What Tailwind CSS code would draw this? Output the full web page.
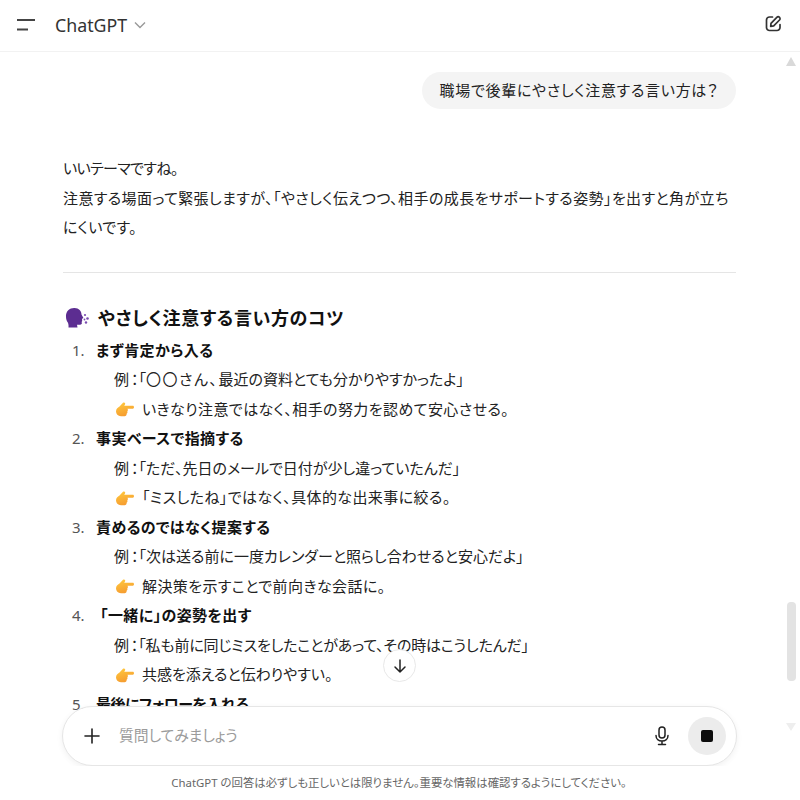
<!DOCTYPE html>
<html lang="ja">
<head>
    <meta charset="UTF-8">
    <meta name="viewport" content="width=device-width, initial-scale=1.0">
    <title>ChatGPT</title>
    <script src="https://cdn.jsdelivr.net/npm/@tailwindcss/browser@4"></script>
</head>
<body class="bg-white h-[800px] w-[800px] overflow-hidden flex flex-col text-[#0d0d0d] text-[15px] leading-[29.5px] font-['Noto_Sans','Noto_Sans_CJK_JP',sans-serif] [font-feature-settings:'palt']">
    <svg width="0" height="0" class="absolute">
        <defs>
            <linearGradient id="handFill" x1="0.2" y1="0" x2="0.6" y2="1">
                <stop offset="0" stop-color="#ffc83d"/>
                <stop offset="1" stop-color="#f59a2f"/>
            </linearGradient>
            <symbol id="hand" viewBox="0 0 20 16">
                <path d="M1 10.500C1 8 2.500 6.800 4.500 5.500L8 1.800c1.200-1 2.800.2 2 1.600L9.200 4.800h8.600c1.600 0 1.600 2.900 0 2.900h-5.300c.6 1 .6 2-.2 2.600.4 1 .1 2-.7 2.500.2 1.300-.7 2.400-2 2.400H6c-3 0-5-2.300-5-5.200z" fill="url(#handFill)"/>
            </symbol>
        </defs>
    </svg>

    <!-- header -->
    <header class="h-[52px] shrink-0 border-b border-[#f2f2f2] flex items-center pl-[17px] pr-[18px]">
        <svg width="18" height="12" viewBox="0 0 18 12" class="mt-[-1px]"><path d="M0 1h18M0 10.500h11" stroke="#444" stroke-width="1.800"/></svg>
        <span class="ml-[20px] text-[17.8px] text-[#333] leading-none">ChatGPT</span>
        <svg width="12" height="8" viewBox="0 0 12 8" class="ml-[7px] mt-[-2px]"><path d="M1 1.500l5 5 5-5" fill="none" stroke="#999" stroke-width="1.400"/></svg>
        <svg width="17" height="17" viewBox="0 0 17 17" class="ml-auto mt-[-4px]" fill="none" stroke="#333" stroke-width="1.700" stroke-linecap="round" stroke-linejoin="round">
            <path d="M7.500 2H4.500A3 3 0 0 0 1.500 5v7.500a3 3 0 0 0 3 3H12a3 3 0 0 0 3-3V9.500"/>
            <path d="M6 8.300l5.800-6a1.900 1.900 0 0 1 2.700 2.700l-5.800 5.900-3 .5z"/>
        </svg>
    </header>

    <div class="relative flex-1 overflow-hidden">
        <!-- conversation -->
        <main class="pl-[63px] pr-[64px] pt-[20px]">
            <div class="flex justify-end">
                <div class="bg-[#f4f4f4] rounded-[19px] h-[37px] w-[314px] flex items-center justify-center text-[#222] tracking-[0.7px]">職場で後輩にやさしく注意する言い方は？</div>
            </div>
            <div class="mt-[45px] text-[#222]">
                <p class="tracking-[-0.6px]">いいテーマですね。</p>
                <p class="tracking-[0.4px]">注意する場面って緊張しますが、「やさしく伝えつつ、相手の成長をサポートする姿勢」を出すと角が立ちにくいです。</p>
            </div>
            <hr class="mt-[29px] border-[#e5e5e5]">
            <h3 class="mt-[29px] flex items-center text-[18px] font-bold leading-[32px] text-[#111] tracking-[0.65px]">
                <svg width="26" height="24" viewBox="0 0 26 24" class="mr-[9px]">
                    <path d="M3 11C2.500 5 7 1.800 11.500 2c4.500.2 7 3 7 6.500l1.800 3.300c.2.500-.2.800-1.300 1l.2 2.200-.6.900.3 1.300c-.2 1.600-2.400 1.900-4.900 1.500l.5 2.800H5.500c.2-2.500-.1-4.200-1-5.600C3.600 14.800 3.100 13 3 11z" fill="#5c2d91"/>
                    <g fill="#7a4bb0"><circle cx="22" cy="9" r="1.100"/><circle cx="24.500" cy="12.500" r="1.300"/><circle cx="21.500" cy="13.500" r="0.900"/><circle cx="23" cy="16.500" r="1.200"/></g>
                </svg>
                やさしく注意する言い方のコツ
            </h3>
            <ol class="mt-[2px] text-[#222]">
                <li>
                    <div class="flex"><span class="w-[33px] pl-[9px] text-[#555]">1.</span><b class="font-bold text-[#111] tracking-[0.4px]">まず肯定から入る</b></div>
                    <div class="pl-[51px]"><span class="mr-[2px]">例</span>：「<span class="tracking-[1.5px]">〇〇さん、</span>最近の資料とても分かりやすかったよ」</div>
                    <div class="pl-[52px] flex items-center tracking-[0.4px]">
                        <svg width="20" height="16" class="mr-[7px]"><use href="#hand"/></svg>
                        いきなり注意ではなく、相手の努力を認めて安心させる。
                    </div>
                </li>
                <li>
                    <div class="flex"><span class="w-[33px] pl-[9px] text-[#555]">2.</span><b class="font-bold text-[#111] tracking-[0.4px]">事実ベースで指摘する</b></div>
                    <div class="pl-[51px]"><span class="mr-[2px]">例</span>：「ただ、先日のメールで日付が少し違っていたんだ」</div>
                    <div class="pl-[52px] flex items-center tracking-[0.4px]">
                        <svg width="20" height="16" class="mr-[7px]"><use href="#hand"/></svg>
                        「ミスしたね」ではなく、具体的な出来事に絞る。
                    </div>
                </li>
                <li>
                    <div class="flex"><span class="w-[33px] pl-[9px] text-[#555]">3.</span><b class="font-bold text-[#111] tracking-[0.35px]">責めるのではなく提案する</b></div>
                    <div class="pl-[51px]"><span class="mr-[2px]">例</span>：「次は送る前に一度カレンダーと照らし合わせると安心だよ」</div>
                    <div class="pl-[52px] flex items-center tracking-[0.4px]">
                        <svg width="20" height="16" class="mr-[7px]"><use href="#hand"/></svg>
                        解決策を示すことで前向きな会話に。
                    </div>
                </li>
                <li>
                    <div class="flex"><span class="w-[33px] pl-[9px] text-[#555]">4.</span><b class="font-bold text-[#111] tracking-[0.4px] ml-[4px]">「一緒に」の姿勢を出す</b></div>
                    <div class="pl-[51px] tracking-[-0.15px]"><span class="mr-[2px]">例</span>：「私も前に同じミスをしたことがあって、その時はこうしたんだ」</div>
                    <div class="pl-[52px] flex items-center">
                        <svg width="20" height="16" class="mr-[7px]"><use href="#hand"/></svg>
                        共感を添えると伝わりやすい。
                    </div>
                </li>
                <li>
                    <div class="flex"><span class="w-[33px] pl-[9px] text-[#555]">5.</span><b class="font-bold text-[#111] tracking-[-0.5px]">最後にフォローを入れる</b></div>
                </li>
            </ol>
        </main>

        <!-- scroll to bottom -->
        <button class="absolute left-[383px] top-[597px] size-[33px] rounded-full bg-white border border-[#e8e8e8] flex items-center justify-center">
            <svg width="16" height="16" viewBox="0 0 16 16" fill="none" stroke="#222" stroke-width="1.500" stroke-linecap="round" stroke-linejoin="round"><path d="M8 2v12M3 9l5 5 5-5"/></svg>
        </button>

        <!-- scrollbar -->
        <div class="absolute right-[4px] top-[5px] w-0 h-0 border-x-[5px] border-x-transparent border-b-[9px] border-b-[#d9d9d9]"></div>
        <div class="absolute right-[4px] top-[550px] w-[9px] h-[79px] rounded-[4px] bg-[#e3e3e3]"></div>
        <div class="absolute right-[4px] top-[671px] w-0 h-0 border-x-[5px] border-x-transparent border-t-[8px] border-t-[#eeeeee]"></div>

        <!-- composer -->
        <div class="absolute left-0 right-[14px] bottom-0 bg-transparent">
            <div class="ml-[62px] w-[675px] h-[60px] rounded-[30px] bg-white border border-[#e6e6e6] shadow-[0_2px_6px_rgba(0,0,0,0.06)] flex items-center pl-[20px] pr-[10px]">
                <svg width="18" height="18" viewBox="0 0 18 18" stroke="#222" stroke-width="1.600" stroke-linecap="round"><path d="M9 2v14M2 9h14"/></svg>
                <span class="ml-[18px] text-[14.8px] text-[#9b9b9b]">質問してみましょう</span>
                <svg width="16" height="20" viewBox="0 0 16 20" class="ml-auto mr-[18px]" fill="none" stroke="#222" stroke-width="1.500" stroke-linecap="round"><rect x="5" y="1" width="6" height="11" rx="3"/><path d="M2 9.500c0 3.500 2.700 5.500 6 5.500s6-2 6-5.500M8 15v3.500M4.500 18.500h7"/></svg>
                <div class="size-[38px] rounded-full bg-[#ececec] flex items-center justify-center">
                    <div class="size-[12px] rounded-[2px] bg-[#0d0d0d]"></div>
                </div>
            </div>
            <div class="h-[34px] bg-white text-center text-[11.4px] leading-[34px] text-[#666] ml-[12px]">ChatGPT の回答は必ずしも正しいとは限りません。重要な情報は確認するようにしてください。</div>
        </div>
    </div>
</body>
</html>
